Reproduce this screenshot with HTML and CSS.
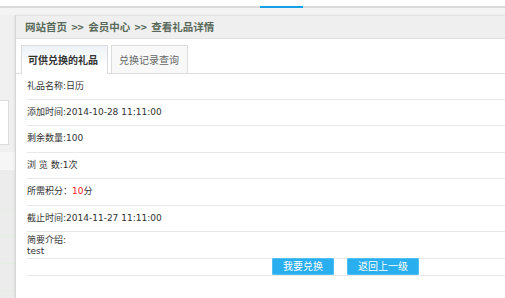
FILE: index.html
```html
<!DOCTYPE html>
<html lang="zh-CN">
<head>
<meta charset="utf-8">
<title>查看礼品详情</title>
<link rel="stylesheet" href="styles.css">
</head>
<body>
<div class="topbar">
  <div class="topline"><span class="topline-active"></span></div>
  <div class="subbar"></div>
</div>
<div class="main">
  <aside class="side">
    <div class="side-gap"></div>
    <div class="side-box"></div>
    <div class="side-gap2"></div>
    <div class="side-light"></div>
    <div class="side-list">
      <div class="side-item s1"></div>
      <div class="side-item"></div>
      <div class="side-item"></div>
      <div class="side-item"></div>
    </div>
  </aside>
  <section class="panel">
    <div class="crumb">网站首页 &gt;&gt; 会员中心 &gt;&gt; 查看礼品详情</div>
    <div class="tabs">
      <div class="tab tab-active">可供兑换的礼品</div>
      <div class="tab">兑换记录查询</div>
    </div>
    <div class="rows">
      <div class="row">礼品名称:日历</div>
      <div class="row">添加时间:2014-10-28 11:11:00</div>
      <div class="row">剩余数量:100</div>
      <div class="row">浏 览 数:1次</div>
      <div class="row">所需积分：<span class="red">10</span>分</div>
      <div class="row">截止时间:2014-11-27 11:11:00</div>
      <div class="row row-intro">简要介绍:<br>test</div>
      <div class="row-btns">
        <button class="btn btn-1">我要兑换</button>
        <button class="btn btn-2">返回上一级</button>
      </div>
    </div>
  </section>
</div>
</body>
</html>
```
FILE: styles.css
```css
html, body {
  margin: 0;
  padding: 0;
  background: #fff;
  font-family: "Noto Sans CJK SC", "Liberation Sans", sans-serif;
  color: #333;
}
body { width: 505px; height: 298px; overflow: hidden; }

.topbar { padding-top: 6px; }
.topline {
  height: 2px;
  background: #dadada;
  display: flex;
  padding-left: 260px;
}
.topline-active { width: 43px; height: 2px; background: #12a1e6; }
.subbar { height: 7px; background: #f4f4f4; }

.main { display: flex; height: 283px; }

.side {
  width: 15px;
  background: #f0f0f0;
  display: flex;
  flex-direction: column;
}
.side-gap { height: 85px; }
.side-box {
  width: 9px;
  height: 45px;
  box-sizing: border-box;
  background: #fff;
  border: 1px solid #dcdcdc;
  border-left: none;
}
.side-gap2 { height: 7px; }
.side-light { height: 18px; background: #f6f6f6; }
.side-list { flex: 1; background: #ececec; }
.side-item { height: 26px; border-bottom: 1px solid #e3efe0; }
.side-item.s1 { height: 39px; }

.panel {
  flex: 1;
  border-left: 1px solid #d6d6d6;
  box-shadow: -1px 0 2px rgba(0,0,0,0.06);
  background: #fff;
}

.crumb {
  height: 22px;
  line-height: 22px;
  border-top: 1px solid #e4e4e4;
  border-bottom: 1px solid #e0e0e0;
  background: #efefef;
  padding-left: 9px;
  font-size: 10.5px;
  font-weight: bold;
  color: #5a6a5a;
  white-space: pre;
  word-spacing: 2px;
}

.tabs {
  margin-top: 6px;
  padding-left: 5px;
  display: flex;
  gap: 3px;
  border-bottom: 1px solid #dedede;
  height: 28px;
}
.tab {
  height: 28px;
  box-sizing: border-box;
  border: 1px solid #dcdcdc;
  border-bottom: none;
  background: #f8f8f8;
  font-size: 10px;
  line-height: 27px;
  color: #666;
  padding: 0 0 0 7px;
  width: 77px;
  white-space: nowrap;
}
.tab-active {
  width: 87px;
  padding: 0 0 0 6px;
  height: 29px;
  background: linear-gradient(#edf2f7, #ffffff 70%);
  color: #333;
  font-weight: bold;
}

.rows { padding-left: 11px; }
.row {
  height: 26.4px;
  box-sizing: border-box;
  border-bottom: 1px solid #e8e8e8;
  font-family: "DejaVu Sans", "Noto Sans CJK SC", sans-serif;
  font-size: 9px;
  line-height: 24px;
  white-space: pre;
  color: #333;
}
.row:first-child { height: 26px; }
.red { color: #ff2020; }
.row-intro {
  height: 27px;
  line-height: 11px;
  padding-top: 3px;
  white-space: normal;
}
.row-btns {
  height: 17px;
  box-sizing: border-box;
  border-bottom: 1px solid #e8e8e8;
  display: flex;
  gap: 13px;
  padding-left: 245px;
}
.btn {
  height: 17px;
  margin-top: -1px;
  border: 1px solid #4fc0f4;
  border-radius: 1px;
  background: #29aef0;
  color: #fff;
  font-family: "Noto Sans CJK SC", sans-serif;
  font-size: 10px;
  line-height: 14px;
  padding: 0;
  cursor: pointer;
}
.btn-1 { width: 62px; }
.btn-2 { width: 72px; }
```
